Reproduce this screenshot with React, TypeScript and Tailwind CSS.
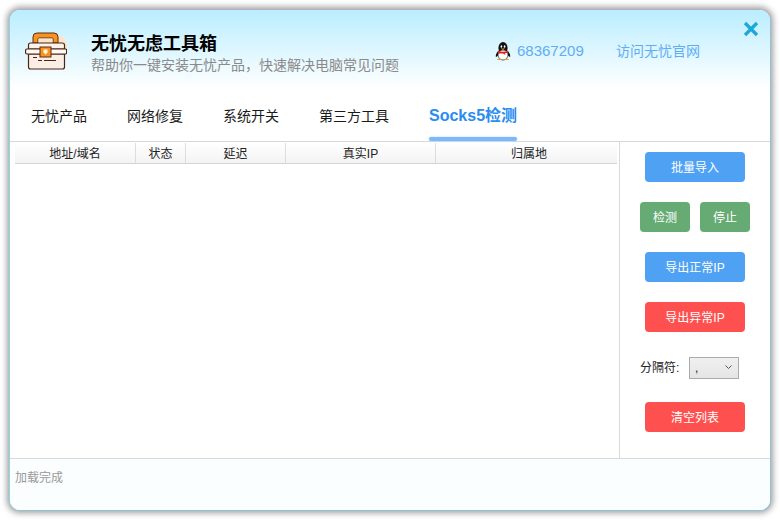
import React from "react";

const FONT = { fontFamily: '"Liberation Sans", "Noto Sans CJK SC", sans-serif' };

function ToolboxIcon() {
  return (
    <svg width="42" height="38" viewBox="0 0 42 38" className="shrink-0">
      <path d="M26 1 Q41 3 42 14 Q42 22 36 24 H26 Z" fill="#fde3c8" />
      <path d="M8 11 V5 Q8 1 12 1 H29 Q33 1 33 5 V11 H28 V7 Q28 6 27 6 H14 Q13 6 13 7 V11 Z" fill="#f7931e" stroke="#5a2d16" strokeWidth="1" />
      <rect x="13.5" y="6.5" width="14" height="5" fill="#fde3c8" />
      <path d="M3.5 17 V13 Q3.5 11 5.5 11 H37 Q39.5 11 39.5 13 V17 Z" fill="#fdf3ea" stroke="#4a2414" strokeWidth="1.2" />
      <path d="M3.5 22 H39.5 V35 Q39.5 37 37.5 37 H5.5 Q3.5 37 3.5 35 Z" fill="#fbeee4" stroke="#4a2414" strokeWidth="1.2" />
      <rect x="0.6" y="17" width="41" height="5" rx="1.2" fill="#fffaf5" stroke="#4a2414" strokeWidth="1.2" />
      <rect x="15" y="15" width="11" height="10" fill="#f7931e" stroke="#5a2d16" strokeWidth="1" />
      <path d="M18.5 17.5 H22.5 V20.5 L20.5 22.5 L18.5 20.5 Z" fill="#fff3d8" />
      <path d="M8 25.5 H12 M13 28.5 H17 M19 28.5 H31" stroke="#4a2414" strokeWidth="1" />
    </svg>
  );
}

function PenguinIcon() {
  return (
    <svg width="16" height="19" viewBox="0 0 16 19" className="shrink-0">
      <ellipse cx="8" cy="6" rx="4.6" ry="6" fill="#111" />
      <path d="M3 9 Q0 13 1 15 L4 13 Z M13 9 Q16 13 15 15 L12 13 Z" fill="#111" />
      <ellipse cx="8" cy="13" rx="5" ry="5" fill="#fff" stroke="#222" strokeWidth="0.7" />
      <path d="M3 8.5 Q8 11 13 8.5 L13 11 H10 L10.5 13 L8 11.5 H3 Z" fill="#e02020" />
      <ellipse cx="6.4" cy="4.5" rx="0.8" ry="1.2" fill="#fff" />
      <ellipse cx="9.6" cy="4.5" rx="0.8" ry="1.2" fill="#fff" />
      <path d="M5.8 6.4 H10.2 L8 8 Z" fill="#f0a020" />
      <path d="M2 17.5 Q4 16 7 18 H2 Z M14 17.5 Q12 16 9 18 H14 Z" fill="#f0a020" />
    </svg>
  );
}

function CloseIcon() {
  return (
    <svg width="16" height="16" viewBox="0 0 16 16" className="shrink-0">
      <path d="M2 2 L14 14 M14 2 L2 14" stroke="#1ba7d8" strokeWidth="3.2" />
    </svg>
  );
}

const tabs = ["无忧产品", "网络修复", "系统开关", "第三方工具"];

const columns = [
  { name: "地址/域名", width: "w-[121px]" },
  { name: "状态", width: "w-[50px]" },
  { name: "延迟", width: "w-[100px]" },
  { name: "真实IP", width: "w-[150px]" },
  { name: "归属地", width: "flex-1 pl-[5px]" },
];

function ActionButton({ label, color, width }: { label: string; color: string; width: string }) {
  return (
    <button className={`${color} ${width} h-[30px] rounded-[4px] pt-[2px] text-[12px] text-white`}>
      {label}
    </button>
  );
}

export default function App() {
  return (
    <div className="w-[780px] h-[520px] bg-white p-[10px]" style={FONT}>
      <div className="w-[760px] h-[500px] flex flex-col overflow-hidden rounded-[10px] bg-white shadow-[-1px_0_0_#8fd3e6,1px_1px_0_#8fc3d3,0_0_6px_3px_rgba(0,0,0,0.38)]">
        <div className="h-[132px] shrink-0 flex flex-col bg-gradient-to-b from-[#b9edff] to-white to-60%">
          <div className="flex h-[68px] pl-[15px] pr-[11px] pt-[13px]">
            <div className="mt-[9px]">
              <ToolboxIcon />
            </div>
            <div className="ml-[24px] mt-[9px] w-[404px]">
              <div className="text-[18px] leading-[24px] font-bold text-black">无忧无虑工具箱</div>
              <div className="text-[14px] leading-[18px] text-[#8a8a8a]">
                帮助你一键安装无忧产品，快速解决电脑常见问题
              </div>
            </div>
            <div className="flex items-center h-[20px] mt-[18px] w-[121px]">
              <PenguinIcon />
              <span className="ml-[6px] text-[15px] text-[#60adf5]">68367209</span>
            </div>
            <div className="mt-[18px] text-[14px] leading-[20px] text-[#60adf5]">访问无忧官网</div>
            <div className="ml-auto mt-[-2px]">
              <CloseIcon />
            </div>
          </div>
          <div className="flex items-end h-[64px] pl-[21px] gap-[40px] border-b border-[#d9d9d9]">
            {tabs.map((tab) => (
              <div key={tab} className="h-[44px] pt-[7px] text-[14px] leading-[24px] text-[#1a1a1a]">
                {tab}
              </div>
            ))}
            <div className="h-[44px] pt-[7px] flex flex-col items-center">
              <div className="text-[16px] leading-[24px] font-bold text-[#2a8cf0]">Socks5检测</div>
              <div className="mt-[9px] h-[4px] w-[88px] rounded-[2px] bg-[#7cb9fb] shadow-[0_0_2px_#a8d2fc]"></div>
            </div>
          </div>
        </div>

        <div className="h-[317px] shrink-0 flex border-b border-[#d9d9d9]">
          <div className="w-[610px] shrink-0 border-r border-[#d9d9d9] pl-[5px] pr-[2px] pt-[1px]">
            <div className="flex h-[21px] border-b border-[#d5d5d5] bg-gradient-to-b from-white to-[#f3f3f3]">
              {columns.map((col, i) => (
                <div
                  key={col.name}
                  className={`${col.width} ${i < 4 ? "border-r border-[#dddddd]" : ""} pt-[1px] text-center text-[12px] leading-[20px] text-[#222222]`}
                >
                  {col.name}
                </div>
              ))}
            </div>
          </div>
          <div className="flex-1 flex flex-col items-center pt-[10px]">
            <ActionButton label="批量导入" color="bg-[#4ea1f3]" width="w-[100px]" />
            <div className="flex gap-[10px] mt-[20px]">
              <ActionButton label="检测" color="bg-[#65ab73]" width="w-[50px]" />
              <ActionButton label="停止" color="bg-[#65ab73]" width="w-[50px]" />
            </div>
            <div className="mt-[20px]">
              <ActionButton label="导出正常IP" color="bg-[#4ea1f3]" width="w-[100px]" />
            </div>
            <div className="mt-[20px]">
              <ActionButton label="导出异常IP" color="bg-[#ff5050]" width="w-[100px]" />
            </div>
            <div className="flex items-center w-[110px] mt-[24px] h-[23px]">
              <span className="w-[49px] text-[12px] text-[#222222]">分隔符:</span>
              <div className="w-[50px] h-[22px] flex items-center justify-between border border-[#ababab] bg-gradient-to-b from-[#f0f0f0] to-[#e5e5e5] pl-[5px] pr-[6px]">
                <span className="text-[12px] leading-[16px] text-[#222222]">,</span>
                <svg width="7" height="5" viewBox="0 0 7 5">
                  <path d="M0.5 0.5 L3.5 3.5 L6.5 0.5" fill="none" stroke="#555555" strokeWidth="1" />
                </svg>
              </div>
            </div>
            <div className="mt-[23px]">
              <ActionButton label="清空列表" color="bg-[#ff5050]" width="w-[100px]" />
            </div>
          </div>
        </div>

        <div className="flex-1 bg-[#fbfeff] pl-[5px] pt-[11px] text-[12px] leading-[17px] text-[#999999]">
          加载完成
        </div>
      </div>
    </div>
  );
}
